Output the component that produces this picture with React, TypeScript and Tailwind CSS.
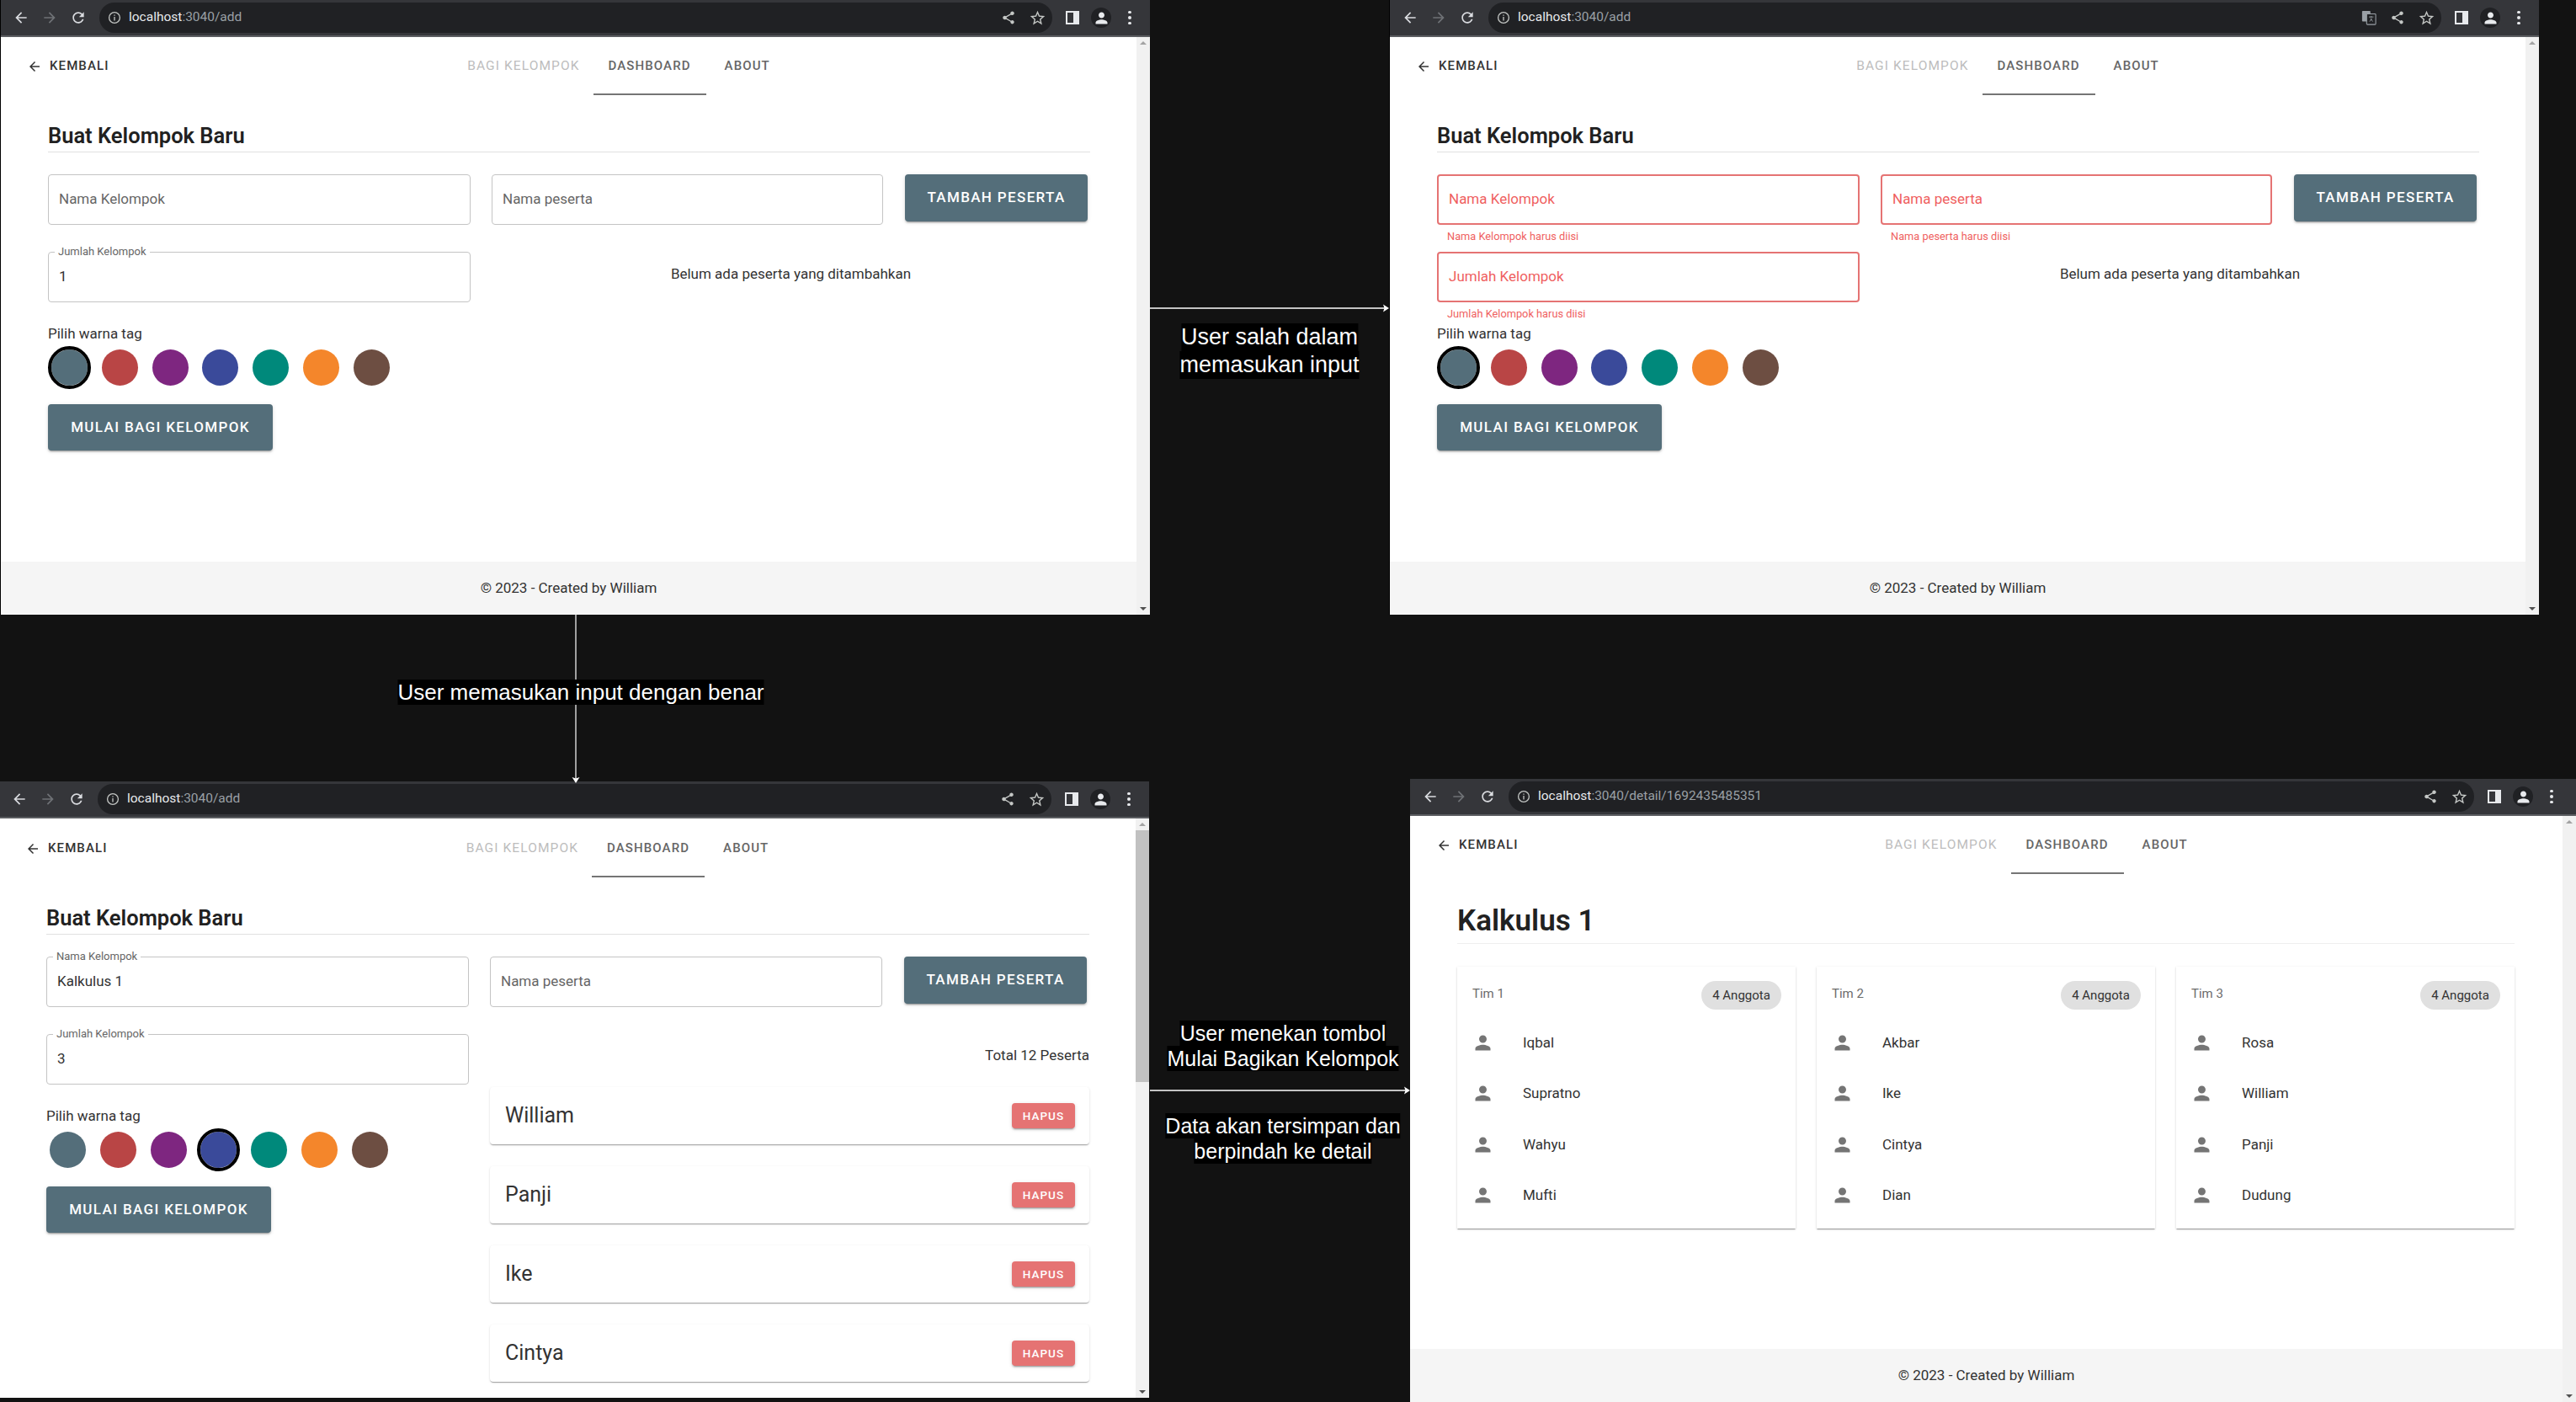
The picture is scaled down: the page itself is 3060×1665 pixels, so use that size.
import React from "react";

const ARROW_BACK = "M20 11H7.83l5.59-5.59L12 4l-8 8 8 8 1.41-1.41L7.83 13H20v-2z";
const PERSON =
  "M12 12c2.21 0 4-1.79 4-4s-1.79-4-4-4-4 1.79-4 4 1.79 4 4 4zm0 2c-2.67 0-8 1.34-8 4v2h16v-2c0-2.66-5.33-4-8-4z";
const RELOAD =
  "M17.65 6.35C16.2 4.9 14.21 4 12 4c-4.42 0-7.99 3.58-7.99 8s3.57 8 7.99 8c3.73 0 6.84-2.55 7.73-6h-2.08c-.82 2.33-3.04 4-5.65 4-3.31 0-6-2.69-6-6s2.69-6 6-6c1.66 0 3.14.69 4.22 1.78L13 11h7V4l-2.35 2.35z";
const STAR =
  "M22 9.24l-7.19-.62L12 2 9.19 8.63 2 9.24l5.46 4.73L5.82 21 12 17.27 18.18 21l-1.63-7.03L22 9.24zM12 15.4l-3.76 2.27 1-4.28-3.32-2.88 4.38-.38L12 6.1l1.71 4.04 4.38.38-3.32 2.88 1 4.28L12 15.4z";
const SHARE =
  "M18 16.08c-.76 0-1.44.3-1.96.77L8.91 12.7c.05-.23.09-.46.09-.7s-.04-.47-.09-.7l7.05-4.11c.54.5 1.25.81 2.04.81 1.66 0 3-1.34 3-3s-1.34-3-3-3-3 1.34-3 3c0 .24.04.47.09.7L8.04 9.81C7.5 9.31 6.79 9 6 9c-1.66 0-3 1.34-3 3s1.34 3 3 3c.79 0 1.5-.31 2.04-.81l7.12 4.16c-.05.21-.08.43-.08.65 0 1.61 1.31 2.92 2.92 2.92s2.92-1.31 2.92-2.92-1.31-2.92-2.92-2.92z";

const Icon = ({ d, size = 20, className = "" }: { d: string; size?: number; className?: string }) => (
  <svg viewBox="0 0 24 24" width={size} height={size} fill="currentColor" className={`shrink-0 ${className}`}>
    <path d={d} />
  </svg>
);

const InfoIcon = () => (
  <svg viewBox="0 0 16 16" width="16" height="16" fill="none" stroke="#c4c7c5" strokeWidth="1.3" className="shrink-0">
    <circle cx="8" cy="8" r="6.4" />
    <path d="M8 7v4.4M8 4.4v1.4" />
  </svg>
);

const TranslateIcon = () => (
  <svg viewBox="0 0 20 20" width="18" height="18">
    <rect x="1" y="1" width="11" height="14" rx="1" fill="#9aa0a6" />
    <rect x="7" y="5" width="12" height="14" rx="1" fill="#202124" stroke="#9aa0a6" strokeWidth="1.2" />
    <path d="M10 9h6M13 8v2M11 15l3-4M12 11l3 4" stroke="#9aa0a6" strokeWidth="1" fill="none" />
  </svg>
);

const PanelIcon = () => (
  <svg viewBox="0 0 16 16" width="16" height="16">
    <path fillRule="evenodd" d="M0 0h16v16H0zM2 2v12h7V2z" fill="#e8eaed" />
  </svg>
);

const AvatarIcon = () => (
  <div className="flex h-[24px] w-[24px] items-center justify-center rounded-full bg-[#202124] text-[#e8eaed]">
    <Icon d={PERSON} size={21} />
  </div>
);

const DotsIcon = () => (
  <div className="flex flex-col gap-[3px]">
    <span className="h-[3.5px] w-[3.5px] rounded-full bg-[#e8eaed]" />
    <span className="h-[3.5px] w-[3.5px] rounded-full bg-[#e8eaed]" />
    <span className="h-[3.5px] w-[3.5px] rounded-full bg-[#e8eaed]" />
  </div>
);

const ToolBox = ({ children }: { children: React.ReactNode }) => (
  <div className="flex h-[36px] w-[34px] shrink-0 items-center justify-center">{children}</div>
);

const ChromeBar = ({
  path,
  translate,
  wide,
}: {
  path: string;
  translate?: boolean;
  wide?: boolean;
}) => (
  <div
    className={`flex h-[44px] shrink-0 items-start border-b-2 border-[#5b5d61] bg-[#35363a] pt-[3px] pl-[7px] ${
      wide ? "pr-[12px]" : "pr-[7px]"
    }`}
  >
    <ToolBox>
      <Icon d={ARROW_BACK} className="text-[#dadce0]" />
    </ToolBox>
    <ToolBox>
      <Icon d={ARROW_BACK} className="rotate-180 text-[#6f7276]" />
    </ToolBox>
    <ToolBox>
      <Icon d={RELOAD} className="text-[#dadce0]" />
    </ToolBox>
    <div className="ml-[8px] mr-[7px] flex h-[36px] min-w-0 flex-1 items-center rounded-full bg-[#202124] pl-[10px] pr-[1px]">
      <InfoIcon />
      <span className="ml-[9px] flex-1 text-[15.5px] text-[#9aa0a6]">
        <span className="text-[#e8eaed]">localhost</span>
        {path}
      </span>
      {translate && (
        <ToolBox>
          <TranslateIcon />
        </ToolBox>
      )}
      <ToolBox>
        <Icon d={SHARE} size={18} className="text-[#c4c7c5]" />
      </ToolBox>
      <ToolBox>
        <Icon d={STAR} size={21} className="text-[#c4c7c5]" />
      </ToolBox>
    </div>
    <ToolBox>
      <PanelIcon />
    </ToolBox>
    <ToolBox>
      <AvatarIcon />
    </ToolBox>
    <ToolBox>
      <DotsIcon />
    </ToolBox>
  </div>
);

const Scrollbar = ({ thumb }: { thumb?: boolean }) => (
  <div className="flex w-[16px] shrink-0 flex-col bg-[#f1f1f1]">
    <div className="flex h-[14px] items-center justify-center">
      <span className="h-0 w-0 border-x-[4px] border-b-[4px] border-x-transparent border-b-[#a3a3a3]" />
    </div>
    {thumb && <div className="h-[299px] bg-[#c1c1c1]" />}
    <div className="flex-1" />
    <div className="flex h-[14px] items-center justify-center">
      <span className="h-0 w-0 border-x-[4px] border-t-[4px] border-x-transparent border-t-[#505050]" />
    </div>
  </div>
);

const NavBar = () => (
  <div className="flex h-[69px] shrink-0 text-[15px] font-medium tracking-[1.1px] uppercase">
    <div className="flex w-[119px] shrink-0 items-center whitespace-nowrap pl-[31px] text-[#333]">
      <Icon d={ARROW_BACK} size={18} />
      <span className="ml-[9px]">Kembali</span>
    </div>
    <div className="flex flex-1 justify-center">
      <div className="flex items-center pr-[16px] pl-[18px] text-[15.5px] font-normal text-[#bdbdbd]">Bagi Kelompok</div>
      <div className="flex items-center border-b-2 border-[#757575] px-[18px] pt-[2px] text-[#666]">Dashboard</div>
      <div className="flex items-center pr-[18px] pl-[22px] text-[#666]">About</div>
    </div>
  </div>
);

const Footer = () => (
  <div className="flex h-[63px] shrink-0 items-center justify-center bg-[#f5f5f5] text-[17px] text-[#333]">
    © 2023 - Created by William
  </div>
);

const Field = ({
  label,
  value,
  placeholder,
  error,
  tall,
}: {
  label?: string;
  value?: string;
  placeholder?: string;
  error?: string;
  tall?: boolean;
}) => (
  <div className={tall ? "h-[92px]" : "h-[60px]"}>
    <div
      className={`relative flex h-[60px] items-center rounded-[4px] px-[12px] pb-[1px] text-[17px] ${
        error ? "border-2 border-[#e57373] text-[#ef5f5f]" : "border border-[#c4c4c4] text-[#666]"
      }`}
    >
      {label && (
        <span className="absolute top-[-8px] left-[7px] bg-white px-[4px] text-[13px] leading-[14px] text-[#666]">
          {label}
        </span>
      )}
      <span className={value ? "text-[#333]" : ""}>{value ?? placeholder}</span>
    </div>
    {error && <div className="mt-[6px] pl-[12px] text-[12.8px] leading-[16px] text-[#ef5f5f]">{error}</div>}
  </div>
);

const DARK_BUTTON =
  "flex shrink-0 items-center justify-center rounded-[4px] bg-[#546e7a] text-[17px] font-medium tracking-[1.35px] text-white shadow-[0_3px_1px_-2px_rgba(0,0,0,.2),0_2px_2px_0_rgba(0,0,0,.14),0_1px_5px_0_rgba(0,0,0,.12)]";

const TAG_COLORS = ["#546e7a", "#b94545", "#7e2680", "#3a4a9a", "#00897b", "#f4862b", "#6d4e42"];

const ColorPicker = ({ active }: { active: number }) => (
  <div className="mt-[12px] flex gap-[16.8px] pl-[4px]">
    {TAG_COLORS.map((color, i) => (
      <div
        key={color}
        className={`h-[43px] w-[43px] rounded-full ${i === active ? "outline-4 outline-black" : ""}`}
        style={{ backgroundColor: color }}
      />
    ))}
  </div>
);

const ParticipantRow = ({ name }: { name: string }) => (
  <div className="flex h-[68px] items-center justify-between rounded-[4px] bg-white pr-[17px] pl-[18px] text-[25px] text-[#333] shadow-[0_2px_1px_-1px_rgba(0,0,0,.2),0_1px_1px_0_rgba(0,0,0,.14),0_1px_3px_0_rgba(0,0,0,.12)]">
    {name}
    <div className="flex h-[30px] w-[75px] items-center justify-center rounded-[4px] bg-[#e57373] text-[13.5px] font-medium tracking-[1px] text-white shadow-[0_3px_1px_-2px_rgba(0,0,0,.2),0_2px_2px_0_rgba(0,0,0,.14),0_1px_5px_0_rgba(0,0,0,.12)]">
      HAPUS
    </div>
  </div>
);

type FormMode = "empty" | "error" | "filled";

const GroupForm = ({ mode }: { mode: FormMode }) => (
  <div className="flex-1 overflow-hidden pr-[55px] pl-[56px]">
    <div className="flex h-[68px] items-end border-b border-[#e0e0e0] pb-[1px] text-[25.5px] leading-[36px] font-semibold text-[#212121]">
      Buat Kelompok Baru
    </div>
    <div className="mt-[26px] flex gap-[25px]">
      <div className="w-[502px] shrink-0">
        {mode === "error" ? (
          <Field placeholder="Nama Kelompok" error="Nama Kelompok harus diisi" tall />
        ) : mode === "filled" ? (
          <Field label="Nama Kelompok" value="Kalkulus 1" tall />
        ) : (
          <Field placeholder="Nama Kelompok" tall />
        )}
        {mode === "error" ? (
          <Field placeholder="Jumlah Kelompok" error="Jumlah Kelompok harus diisi" tall />
        ) : (
          <Field label="Jumlah Kelompok" value={mode === "filled" ? "3" : "1"} tall />
        )}
        <div className="-mt-[2px] h-[14px] text-[17px] leading-[14px] text-[#333]">Pilih warna tag</div>
        <ColorPicker active={mode === "filled" ? 3 : 0} />
        <div className={`${DARK_BUTTON} mt-[22px] h-[55px] w-[267px]`}>MULAI BAGI KELOMPOK</div>
      </div>
      <div className="min-w-0 flex-1">
        <div className="flex gap-[26px]">
          <div className="flex-1">
            <Field
              placeholder="Nama peserta"
              error={mode === "error" ? "Nama peserta harus diisi" : undefined}
            />
          </div>
          <div className={`${DARK_BUTTON} mr-[3px] h-[56px] w-[217px]`}>TAMBAH PESERTA</div>
        </div>
        {mode === "filled" ? (
          <>
            <div className="mt-[45px] text-right text-[17px] leading-[24px] text-[#333]">Total 12 Peserta</div>
            <div className="mt-[26px] flex flex-col gap-[26px]">
              {["William", "Panji", "Ike", "Cintya"].map((name) => (
                <ParticipantRow key={name} name={name} />
              ))}
            </div>
          </>
        ) : (
          <div className="mt-[46px] text-center text-[17px] leading-[24px] text-[#333]">
            Belum ada peserta yang ditambahkan
          </div>
        )}
      </div>
    </div>
  </div>
);

const TEAMS = [
  { name: "Tim 1", members: ["Iqbal", "Supratno", "Wahyu", "Mufti"] },
  { name: "Tim 2", members: ["Akbar", "Ike", "Cintya", "Dian"] },
  { name: "Tim 3", members: ["Rosa", "William", "Panji", "Dudung"] },
];

const DetailPage = () => (
  <div className="flex-1 overflow-hidden pr-[57px] pl-[56px]">
    <div className="flex h-[83px] items-end border-b border-[#eeeeee] pb-[4px] text-[35px] leading-[44px] font-semibold text-[#212121]">
      Kalkulus 1
    </div>
    <div className="mt-[27px] grid grid-cols-3 gap-[25px]">
      {TEAMS.map((team) => (
        <div
          key={team.name}
          className="h-[311px] bg-white px-[18px] shadow-[0_2px_1px_-1px_rgba(0,0,0,.2),0_1px_1px_0_rgba(0,0,0,.14),0_1px_3px_0_rgba(0,0,0,.12)]"
        >
          <div className="flex h-[60px] items-start justify-between pt-[17px]">
            <span className="text-[15px] leading-[30px] text-[#6b6b6b]">{team.name}</span>
            <span className="mr-[-1px] flex h-[34px] w-[95px] items-center justify-center rounded-full bg-[#e0e0e0] text-[15px] text-[#333]">
              4 Anggota
            </span>
          </div>
          {team.members.map((member) => (
            <div key={member} className="flex h-[60.5px] items-center text-[17px] text-[#333]">
              <Icon d={PERSON} size={27} className="-ml-[1px] text-[#757575]" />
              <span className="ml-[34px]">{member}</span>
            </div>
          ))}
        </div>
      ))}
    </div>
  </div>
);

const BrowserWindow = ({
  className,
  path,
  translate,
  wide,
  thumb,
  children,
}: {
  className: string;
  path: string;
  translate?: boolean;
  wide?: boolean;
  thumb?: boolean;
  children: React.ReactNode;
}) => (
  <div className={`absolute flex flex-col overflow-hidden bg-white ${className}`}>
    <ChromeBar path={path} translate={translate} wide={wide} />
    <div className="flex min-h-0 flex-1">
      <div className="flex min-w-0 flex-1 flex-col">{children}</div>
      <Scrollbar thumb={thumb} />
    </div>
  </div>
);

const Caption = ({ className, lines }: { className: string; lines: string[] }) => (
  <div className={`absolute flex -translate-x-1/2 flex-col items-center whitespace-nowrap text-white ${className}`}>
    {lines.map((line) => (
      <span key={line} className="bg-black">
        {line}
      </span>
    ))}
  </div>
);

const HArrow = ({ className, width }: { className: string; width: number }) => (
  <svg className={`absolute ${className}`} width={width} height="12" viewBox={`0 0 ${width} 12`}>
    <path d={`M0 6H${width - 2}`} stroke="#fff" strokeWidth="1.4" />
    <path d={`M${width - 7} 1.5L${width} 6L${width - 7} 10.5L${width - 5.5} 6z`} fill="#fff" />
  </svg>
);

const App = () => (
  <div className="relative h-[1665px] w-[3060px] overflow-hidden bg-[#121212] [font-family:Roboto,sans-serif]">
    <BrowserWindow className="top-0 left-0 h-[730px] w-[1366px] border-l border-black" path=":3040/add">
      <NavBar />
      <GroupForm mode="empty" />
      <Footer />
    </BrowserWindow>

    <BrowserWindow className="top-0 left-[1650px] h-[730px] w-[1366px] border-l border-black" path=":3040/add" translate>
      <NavBar />
      <GroupForm mode="error" />
      <Footer />
    </BrowserWindow>

    <BrowserWindow className="top-[928px] left-[-1px] h-[732px] w-[1366px]" path=":3040/add" thumb>
      <div className="h-[1px] shrink-0" />
      <NavBar />
      <GroupForm mode="filled" />
    </BrowserWindow>

    <BrowserWindow className="top-[925px] left-[1675px] h-[740px] w-[1385px]" path=":3040/detail/1692435485351" wide>
      <NavBar />
      <DetailPage />
      <Footer />
    </BrowserWindow>

    <HArrow className="top-[360px] left-[1366px]" width={284} />
    <HArrow className="top-[1289px] left-[1366px]" width={309} />
    <svg className="absolute top-[730px] left-[678px]" width="12" height="200" viewBox="0 0 12 200">
      <path d="M6 0V198" stroke="#fff" strokeWidth="1.2" />
      <path d="M1.5 193L6 200L10.5 193L6 194.5z" fill="#fff" />
    </svg>

    <div className="[font-family:'Liberation_Sans',sans-serif]">
      <Caption className="top-[384px] left-[1508px] text-[27px] leading-[33px]" lines={["User salah dalam", "memasukan input"]} />
      <Caption className="top-[807px] left-[690px] text-[26px] leading-[30px]" lines={["User memasukan input dengan benar"]} />
      <Caption className="top-[1212px] left-[1524px] text-[25px] leading-[30px]" lines={["User menekan tombol", "Mulai Bagikan Kelompok"]} />
      <Caption className="top-[1322px] left-[1524px] text-[25px] leading-[30px]" lines={["Data akan tersimpan dan", "berpindah ke detail"]} />
    </div>
  </div>
);

export default App;
